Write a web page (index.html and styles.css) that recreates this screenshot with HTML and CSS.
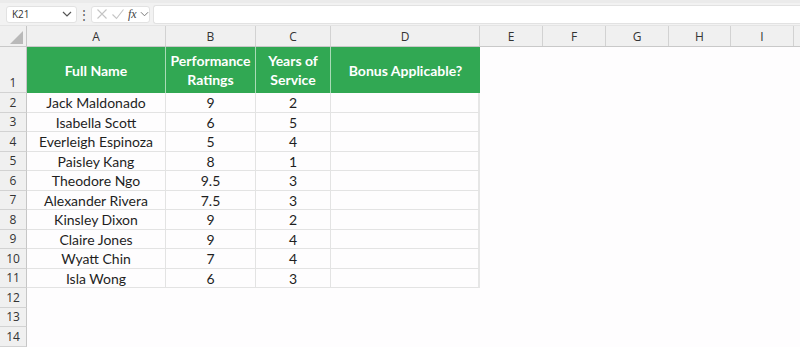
FILE: index.html
```
<!DOCTYPE html>
<html lang="en">
<head>
    <meta charset="UTF-8">
    <title>Bonus Sheet</title>
    <link rel="stylesheet" href="styles.css">
</head>
<body>
    <header class="toolbar">
        <div class="name-box">
            <span>K21</span>
            <svg class="chev" width="10" height="6" viewBox="0 0 10 6"><path d="M1 1l4 4 4-4" fill="none" stroke="#555" stroke-width="1.2"/></svg>
        </div>
        <span class="dots">&#8942;</span>
        <div class="fx-box">
            <svg width="12" height="12" viewBox="0 0 12 12"><path d="M1.5 1.5l9 9M10.5 1.5l-9 9" stroke="#c4c4c4" stroke-width="1.1"/></svg>
            <svg width="14" height="12" viewBox="0 0 14 12"><path d="M1.5 6.5l4 4 7-9" fill="none" stroke="#c4c4c4" stroke-width="1.1"/></svg>
            <span class="fx">fx</span>
            <svg width="9" height="6" viewBox="0 0 10 6"><path d="M1 1l4 4 4-4" fill="none" stroke="#777" stroke-width="1.1"/></svg>
        </div>
        <div class="formula-input"></div>
    </header>

    <main class="sheet">
        <div class="row col-heads">
            <div class="corner"><span class="tri"></span></div>
            <div class="ch">A</div>
            <div class="ch">B</div>
            <div class="ch">C</div>
            <div class="ch">D</div>
            <div class="ch">E</div>
            <div class="ch">F</div>
            <div class="ch">G</div>
            <div class="ch">H</div>
            <div class="ch">I</div>
            <div class="ch last"></div>
        </div>

        <div class="row title-row">
            <div class="rh">1</div>
            <div class="th">Full Name</div>
            <div class="th">Performance Ratings</div>
            <div class="th">Years of Service</div>
            <div class="th">Bonus Applicable?</div>
        </div>

        <div id="body"></div>
    </main>

    <script>
    const people = [
        ['Jack Maldonado', '9', '2'],
        ['Isabella Scott', '6', '5'],
        ['Everleigh Espinoza', '5', '4'],
        ['Paisley Kang', '8', '1'],
        ['Theodore Ngo', '9.5', '3'],
        ['Alexander Rivera', '7.5', '3'],
        ['Kinsley Dixon', '9', '2'],
        ['Claire Jones', '9', '4'],
        ['Wyatt Chin', '7', '4'],
        ['Isla Wong', '6', '3']
    ];

    const body = document.getElementById('body');
    people.forEach((p, i) => {
        const row = document.createElement('div');
        row.className = 'row data-row';
        row.innerHTML = '<div class="rh">' + (i + 2) + '</div>' +
            '<div class="td">' + p[0] + '</div>' +
            '<div class="td">' + p[1] + '</div>' +
            '<div class="td">' + p[2] + '</div>' +
            '<div class="td"></div>';
        body.appendChild(row);
    });
    for (let n = 12; n <= 14; n++) {
        const row = document.createElement('div');
        row.className = 'row empty-row';
        row.innerHTML = '<div class="rh">' + n + '</div>';
        body.appendChild(row);
    }
    </script>
</body>
</html>
```

FILE: styles.css
```
:root {
    --green: #31a853;
    --head-bg: #f0f0f0;
    --head-line: #d2d2d2;
    --grid-line: #e3e3e3;
    --text: #1f1f1f;
}

body {
    margin: 0;
    font-family: 'Lato', 'Open Sans', sans-serif;
    color: var(--text);
    background: #fefdfe;
    overflow: hidden;
}

.toolbar {
    height: 26px;
    background: #f2f2f2;
    border-top: 3px solid #ebebeb;
    box-sizing: border-box;
    display: flex;
    align-items: center;
    padding-left: 6px;
    border-bottom: 1px solid #e4e4e4;
}

.name-box {
    width: 71px;
    height: 17px;
    background: white;
    border: 1px solid #e2e2e2;
    border-radius: 3px;
    box-sizing: border-box;
    display: flex;
    align-items: center;
    justify-content: space-between;
    padding: 0 4px 0 5px;
    font-family: 'Open Sans', sans-serif;
    font-size: 10px;
    color: #333;
}

.dots {
    width: 12px;
    margin-left: 1px;
    text-align: center;
    font-size: 12px;
    color: #555;
}

.fx-box {
    width: 59px;
    height: 17px;
    margin-left: 1px;
    background: white;
    border: 1px solid #e2e2e2;
    border-radius: 3px;
    box-sizing: border-box;
    display: flex;
    align-items: center;
    gap: 3px;
    padding-left: 4px;
}

.fx {
    font-family: 'Liberation Serif', serif;
    font-style: italic;
    font-size: 12px;
    color: #444;
}

.formula-input {
    flex: 1;
    height: 17px;
    margin-left: 3px;
    background: white;
    border: 1px solid #e2e2e2;
    border-right: none;
    border-radius: 3px 0 0 3px;
}

.row {
    display: grid;
    grid-template-columns: 27px 139px 90px 75px 149px 63px 63px 63px 62px 63px 1fr;
}

.col-heads {
    height: 21px;
    background: var(--head-bg);
    border-bottom: 1px solid #c9c9c9;
    box-sizing: border-box;
}

.corner {
    position: relative;
    border-right: 1px solid #c6c6c6;
}

.tri {
    position: absolute;
    right: 3px;
    bottom: 2px;
    width: 0;
    height: 0;
    border-left: 13px solid transparent;
    border-bottom: 13px solid #b9b9b9;
}

.ch {
    border-right: 1px solid var(--head-line);
    display: flex;
    align-items: center;
    justify-content: center;
    font-family: 'Open Sans', sans-serif;
    font-size: 12px;
    color: #333;
}

.ch.last {
    border-right: none;
}

.rh {
    background: var(--head-bg);
    border-right: 1px solid #c6c6c6;
    border-bottom: 1px solid var(--head-line);
    box-sizing: border-box;
    display: flex;
    align-items: flex-end;
    justify-content: center;
    padding-bottom: 1px;
    font-family: 'Open Sans', sans-serif;
    font-size: 12px;
    color: #333;
}

.title-row {
    height: 46px;
}

.th {
    background: var(--green);
    border-right: 1px solid #a9dbb6;
    color: white;
    font-weight: bold;
    font-size: 14px;
    line-height: 19px;
    text-align: center;
    display: flex;
    align-items: center;
    justify-content: center;
    padding: 0 6px;
}

.th:nth-child(5) {
    border-right: none;
}

.data-row, .empty-row {
    height: 19.5px;
}

.data-row .rh, .empty-row .rh {
    align-items: center;
    padding-bottom: 0;
}

.td {
    border-right: 1px solid var(--grid-line);
    border-bottom: 1px solid var(--grid-line);
    display: flex;
    align-items: center;
    justify-content: center;
    padding-top: 1px;
    box-sizing: border-box;
    font-size: 14px;
    color: var(--text);
    white-space: nowrap;
}

.td:nth-child(5) {
    border-right: 2px solid #e6e6e6;
}
```
